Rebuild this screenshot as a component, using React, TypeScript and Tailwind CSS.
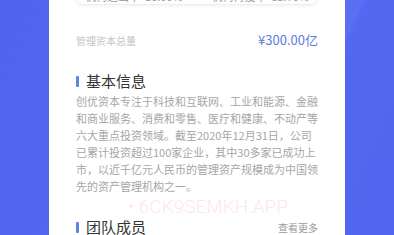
import React from "react";

export default function App() {
  const font = { fontFamily: '"Noto Sans CJK SC", "Noto Sans", sans-serif' };
  return (
    <div
      className="w-[394px] h-[235px] overflow-hidden relative bg-[linear-gradient(115deg,#4f63ef_0%,#5468f1_60%,#5a70f3_72%,#5367f0_73%,#5064ef_100%)]"
      style={font}
    >
      <div className="ml-[49px] w-[296px] h-[235px] bg-white flex flex-col px-[27px]">
        {/* top stats card (cut off) */}
        <div className="-mt-[14px] h-[30px] rounded-b-[7px] border border-[#eeeeee] shadow-[0_1px_4px_rgba(0,0,0,0.06)] flex items-center justify-between px-[8px] text-[11px] leading-[14px] text-[#9a9a9a]">
          <span>机构退出率&nbsp;&nbsp;16.00%</span>
          <span>机构再投率&nbsp;&nbsp;83.70%</span>
        </div>
        {/* total capital */}
        <div className="mt-[27px] flex items-center justify-between h-[16px]">
          <span className="text-[10px] text-[#c4c4c4]">管理资本总量</span>
          <span className="text-[13px] text-[#5b7be0]">¥300.00亿</span>
        </div>
        {/* basic info */}
        <div className="mt-[25px] flex items-center h-[16px]">
          <div className="w-[3px] h-[11px] bg-[#5b86e5] rounded-[1px] mr-[7px]" />
          <span className="text-[15px] text-[#333333]">基本信息</span>
        </div>
        <p className="mt-[4px] text-[11px] leading-[17px] text-[#a6a6a6]">
          创优资本专注于科技和互联网、工业和能源、金融和商业服务、消费和零售、医疗和健康、不动产等六大重点投资领域。截至2020年12月31日，公司已累计投资超过100家企业，其中30多家已成功上市，以近千亿元人民币的管理资产规模成为中国领先的资产管理机构之一。
        </p>
        <div
          className="mt-[0px] h-[24px] flex items-center pl-[52px] text-[19px] text-[#fce6f1] leading-[24px] font-light"
          style={{ fontFamily: 'Roboto, "Noto Sans", sans-serif' }}
        >
          •&nbsp;6CK9SEMKH.APP
        </div>
        <div className="flex items-center justify-between h-[16px]">
          <div className="flex items-center">
            <div className="w-[3px] h-[11px] bg-[#5b86e5] rounded-[1px] mr-[7px]" />
            <span className="text-[15px] text-[#333333]">团队成员</span>
          </div>
          <span className="text-[10px] text-[#999999]">查看更多</span>
        </div>
      </div>
    </div>
  );
}
